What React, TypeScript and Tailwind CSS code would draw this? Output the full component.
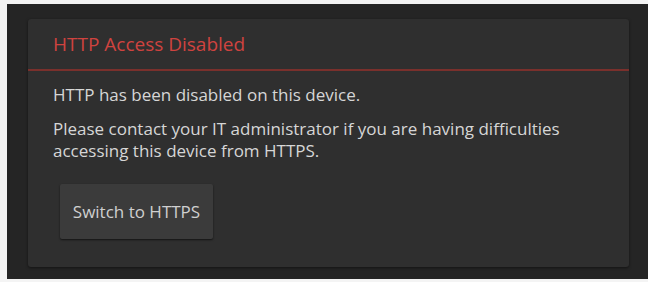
export default function App() {
  return (
    <div className="w-[648px] h-[282px] bg-[#f4f4f4] pt-[4px] pl-[7px] pb-[3px] font-['Open_Sans',sans-serif]">
      <div className="h-full bg-[#252525] pt-[15px] pl-[21px] pr-[19px] pb-[12px]">
        <div className="h-full bg-[#2f2f2f] rounded-[3px] shadow-[0_1px_3px_rgba(0,0,0,0.5)]">
          <div className="h-[52px] px-[25px] flex items-center border-b-2 border-[#7a302c]">
            <h1 className="text-[19px] text-[#cf433f]">HTTP Access Disabled</h1>
          </div>
          <div className="px-[25px] pt-[13px] text-[17px] text-[#d6d6d6] leading-[22px]">
            <p>HTTP has been disabled on this device.</p>
            <p className="mt-[12px] w-[530px]">
              Please contact your IT administrator if you are having difficulties accessing this device from HTTPS.
            </p>
            <button className="mt-[22px] ml-[7px] w-[153px] h-[55px] bg-[#3b3b3b] rounded-[2px] text-[17px] text-[#cfcfcf] shadow-[0_1px_2px_rgba(0,0,0,0.6)]">
              Switch to HTTPS
            </button>
          </div>
        </div>
      </div>
    </div>
  );
}
